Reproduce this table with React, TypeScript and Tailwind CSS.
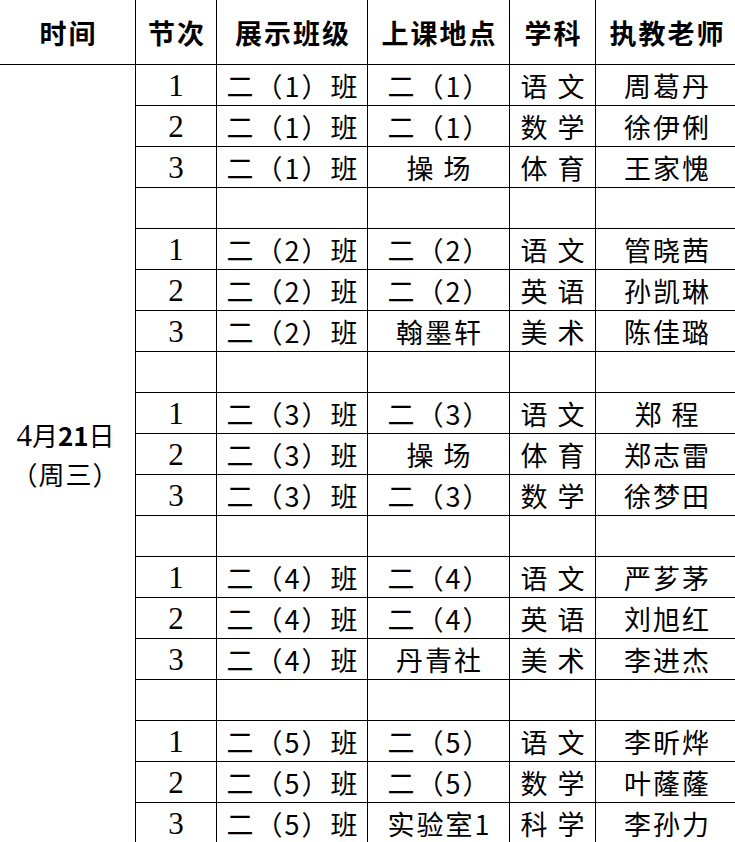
import React from "react";

type Row = [string, string, string, string, string] | null;

const groups: [string, string, string, string][][] = [
  [
    ["二（1）", "语 文", "周葛丹", "1"],
    ["二（1）", "数 学", "徐伊俐", "1"],
    ["操 场", "体 育", "王家愧", "1"],
  ],
  [
    ["二（2）", "语 文", "管晓茜", "2"],
    ["二（2）", "英 语", "孙凯琳", "2"],
    ["翰墨轩", "美 术", "陈佳璐", "2"],
  ],
  [
    ["二（3）", "语 文", "郑 程", "3"],
    ["操 场", "体 育", "郑志雷", "3"],
    ["二（3）", "数 学", "徐梦田", "3"],
  ],
  [
    ["二（4）", "语 文", "严芗茅", "4"],
    ["二（4）", "英 语", "刘旭红", "4"],
    ["丹青社", "美 术", "李进杰", "4"],
  ],
  [
    ["二（5）", "语 文", "李昕烨", "5"],
    ["二（5）", "数 学", "叶蕯蕯", "5"],
    ["实验室1", "科 学", "李孙力", "5"],
  ],
];

const rows: Row[] = [];
groups.forEach((g, gi) => {
  g.forEach((r, i) => {
    rows.push([String(i + 1), `二（${r[3]}）班`, r[0], r[1], r[2]]);
  });
  if (gi < groups.length - 1) rows.push(null);
});

const cjk = "font-['Noto_Sans_CJK_SC',sans-serif]";
const cell = "border border-black p-0 text-center align-middle";
const body = `${cjk} text-[27px] tracking-[2px] pl-[2px] leading-none whitespace-nowrap`;

export default function App() {
  return (
    <div className="w-[735px] h-[842px] overflow-hidden bg-white text-black">
      <table className="border-collapse table-fixed w-[738px] -mt-px -ml-px">
        <colgroup>
          <col className="w-[136px]" />
          <col className="w-[81px]" />
          <col className="w-[151px]" />
          <col className="w-[142px]" />
          <col className="w-[86px]" />
          <col className="w-[142px]" />
        </colgroup>
        <thead>
          <tr className="h-[65px]">
            {["时间", "节次", "展示班级", "上课地点", "学科", "执教老师"].map((h) => (
              <th key={h} className={`${cell} ${cjk} text-[27px] font-semibold tracking-[2px] pl-[2px] pt-[2px] whitespace-nowrap`}>
                {h}
              </th>
            ))}
          </tr>
        </thead>
        <tbody>
          {rows.map((r, i) => (
            <tr key={i} className="h-[41px]">
              {i === 0 && (
                <td rowSpan={rows.length} className={`${cell} ${cjk} text-[26px] leading-[38px]`}>
                  <div className="pr-[4px]">
                    <span className="font-['Liberation_Serif',serif] text-[31px]">4</span>
                    <span>月</span>
                    <span className="font-semibold">21</span>
                    <span>日</span>
                  </div>
                  <div className="pr-[4px] tracking-[1px]">（周三）</div>
                </td>
              )}
              {r === null ? (
                <>
                  <td className={cell}></td>
                  <td className={cell}></td>
                  <td className={cell}></td>
                  <td className={cell}></td>
                  <td className={cell}></td>
                </>
              ) : (
                <>
                  <td className={`${cell} font-['Liberation_Serif',serif] text-[31px] leading-none`}>{r[0]}</td>
                  <td className={`${cell} ${body}`}>{r[1]}</td>
                  <td className={`${cell} ${body}`}>{r[2]}</td>
                  <td className={`${cell} ${body}`}>{r[3]}</td>
                  <td className={`${cell} ${body}`}>{r[4]}</td>
                </>
              )}
            </tr>
          ))}
        </tbody>
      </table>
    </div>
  );
}
